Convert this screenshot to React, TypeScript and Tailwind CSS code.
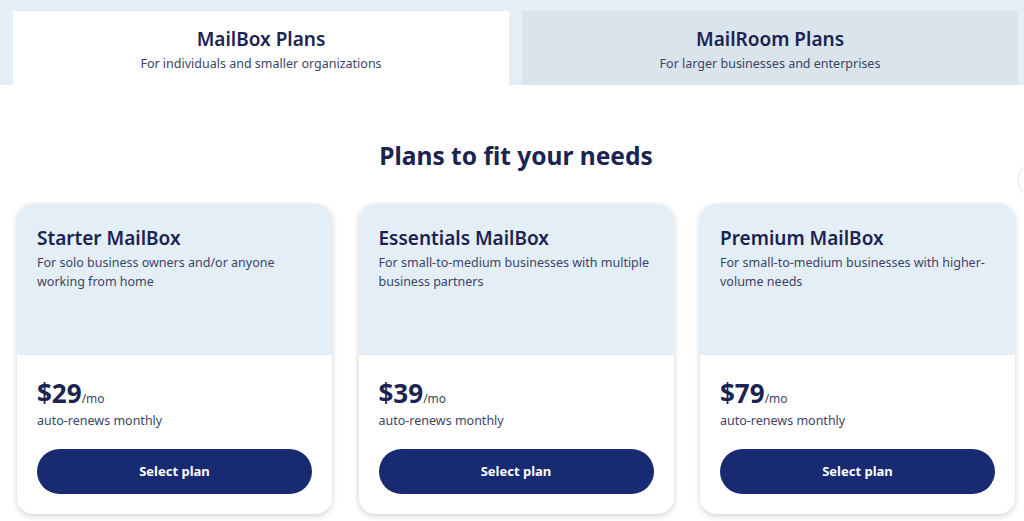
import React from "react";

const plans = [
  { name: "Starter MailBox", desc: "For solo business owners and/or anyone working from home", price: "$29" },
  { name: "Essentials MailBox", desc: "For small-to-medium businesses with multiple business partners", price: "$39" },
  { name: "Premium MailBox", desc: "For small-to-medium businesses with higher-volume needs", price: "$79" },
];

export default function App() {
  return (
    <div className="w-[1024px] h-[521px] overflow-hidden bg-white text-[#1a2352] relative" style={{ fontFamily: "'Noto Sans', sans-serif" }}>
      <div className="bg-[#e4eef6] pt-[11px] pl-[13px] pr-[6px] flex gap-[13px]">
        <div className="flex-1 h-[74px] bg-white flex flex-col items-center pt-[16px]">
          <div className="text-[19px] font-semibold leading-[24px] text-[#1a2352]">MailBox Plans</div>
          <div className="text-[12.5px] leading-[16px] mt-[5px] text-[#3b4468]">For individuals and smaller organizations</div>
        </div>
        <div className="flex-1 h-[74px] bg-[#d9e4ec] flex flex-col items-center pt-[16px]">
          <div className="text-[19px] font-semibold leading-[24px] text-[#1a2352]">MailRoom Plans</div>
          <div className="text-[12.5px] leading-[16px] mt-[5px] text-[#3b4468]">For larger businesses and enterprises</div>
        </div>
      </div>
      <h2 className="text-center text-[24.5px] font-bold leading-[32px] mt-[55px] pl-[8px] text-[#1a2352]">Plans to fit your needs</h2>
      <div className="flex gap-[26.5px] pl-[17px] mt-[32px]">
        {plans.map((p) => (
          <div key={p.name} className="w-[315px] h-[310px] rounded-[16px] bg-white shadow-[0_2px_6px_rgba(0,0,0,0.18)] overflow-hidden flex flex-col">
            <div className="h-[151px] bg-[#e4eef6] px-[20px] pt-[22px]">
              <div className="text-[19px] font-semibold leading-[24px] text-[#1a2352]">{p.name}</div>
              <div className="text-[12.5px] leading-[19px] mt-[3px] text-[#3b4468]">{p.desc}</div>
            </div>
            <div className="px-[20px] pt-[21px]">
              <div className="flex items-baseline">
                <span className="text-[26px] font-bold leading-[34px] text-[#1a2352]">{p.price}</span>
                <span className="text-[12px] text-[#3b4468]">/mo</span>
              </div>
              <div className="text-[12.5px] leading-[18px] mt-[2px] text-[#3b4468]">auto-renews monthly</div>
              <button className="mt-[19px] w-full h-[45px] rounded-full bg-[#172a72] text-white text-[13px] font-bold">Select plan</button>
            </div>
          </div>
        ))}
      </div>
      <div className="absolute left-[1018px] top-[160px] w-[40px] h-[40px] rounded-full border border-[#e8e8e8]"></div>
    </div>
  );
}
